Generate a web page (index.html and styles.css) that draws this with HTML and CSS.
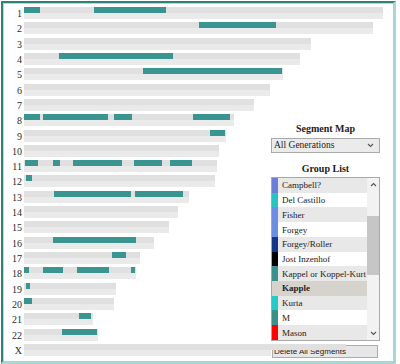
FILE: index.html
```html
<!DOCTYPE html>
<html>
<head>
<meta charset="utf-8">
<title>Segment Map</title>
<link rel="stylesheet" href="styles.css">
</head>
<body>
<div class="frame">
  <div class="chart">
    <div class="row"><span class="lbl">1</span><div class="bar" style="width:359px"><div class="top"><i class="seg" style="left:0;width:16px"></i><i class="seg" style="left:70px;width:72px"></i></div><div class="bot"></div></div></div>
    <div class="row"><span class="lbl">2</span><div class="bar" style="width:349px"><div class="top"><i class="seg" style="left:175px;width:77px"></i></div><div class="bot"></div></div></div>
    <div class="row"><span class="lbl">3</span><div class="bar" style="width:287px"><div class="top"></div><div class="bot"></div></div></div>
    <div class="row"><span class="lbl">4</span><div class="bar" style="width:276px"><div class="top"><i class="seg" style="left:35px;width:114px"></i></div><div class="bot"></div></div></div>
    <div class="row"><span class="lbl">5</span><div class="bar" style="width:259px"><div class="top"><i class="seg" style="left:119px;width:139px"></i></div><div class="bot"></div></div></div>
    <div class="row"><span class="lbl">6</span><div class="bar" style="width:246px"><div class="top"></div><div class="bot"></div></div></div>
    <div class="row"><span class="lbl">7</span><div class="bar" style="width:230px"><div class="top"></div><div class="bot"></div></div></div>
    <div class="row"><span class="lbl">8</span><div class="bar" style="width:210px"><div class="top"><i class="seg" style="left:0;width:16px"></i><i class="seg" style="left:19px;width:65px"></i><i class="seg" style="left:90px;width:18px"></i><i class="seg" style="left:169px;width:37px"></i></div><div class="bot"></div></div></div>
    <div class="row"><span class="lbl">9</span><div class="bar" style="width:202px"><div class="top"><i class="seg" style="left:186px;width:15px"></i></div><div class="bot"></div></div></div>
    <div class="row"><span class="lbl">10</span><div class="bar" style="width:195px"><div class="top"></div><div class="bot"></div></div></div>
    <div class="row"><span class="lbl">11</span><div class="bar" style="width:193px"><div class="top"><i class="seg" style="left:1px;width:13px"></i><i class="seg" style="left:29px;width:7px"></i><i class="seg" style="left:49px;width:49px"></i><i class="seg" style="left:110px;width:28px"></i><i class="seg" style="left:146px;width:22px"></i></div><div class="bot"></div></div></div>
    <div class="row"><span class="lbl">12</span><div class="bar" style="width:191px"><div class="top"><i class="seg" style="left:2px;width:6px"></i></div><div class="bot"></div></div></div>
    <div class="row"><span class="lbl">13</span><div class="bar" style="width:165px"><div class="top"><i class="seg" style="left:30px;width:77px"></i><i class="seg" style="left:111px;width:48px"></i></div><div class="bot"></div></div></div>
    <div class="row"><span class="lbl">14</span><div class="bar" style="width:154px"><div class="top"></div><div class="bot"></div></div></div>
    <div class="row"><span class="lbl">15</span><div class="bar" style="width:145px"><div class="top"></div><div class="bot"></div></div></div>
    <div class="row"><span class="lbl">16</span><div class="bar" style="width:130px"><div class="top"><i class="seg" style="left:29px;width:83px"></i></div><div class="bot"></div></div></div>
    <div class="row"><span class="lbl">17</span><div class="bar" style="width:116px"><div class="top"><i class="seg" style="left:88px;width:14px"></i></div><div class="bot"></div></div></div>
    <div class="row"><span class="lbl">18</span><div class="bar" style="width:112px"><div class="top"><i class="seg" style="left:0;width:5px"></i><i class="seg" style="left:19px;width:20px"></i><i class="seg" style="left:53px;width:32px"></i><i class="seg" style="left:107px;width:4px"></i></div><div class="bot"></div></div></div>
    <div class="row"><span class="lbl">19</span><div class="bar" style="width:92px"><div class="top"><i class="seg" style="left:2px;width:4px"></i></div><div class="bot"></div></div></div>
    <div class="row"><span class="lbl">20</span><div class="bar" style="width:90px"><div class="top"><i class="seg" style="left:0;width:8px"></i></div><div class="bot"></div></div></div>
    <div class="row"><span class="lbl">21</span><div class="bar" style="width:69px"><div class="top"><i class="seg" style="left:55px;width:12px"></i></div><div class="bot"></div></div></div>
    <div class="row"><span class="lbl">22</span><div class="bar" style="width:74px"><div class="top"><i class="seg" style="left:38px;width:35px"></i></div><div class="bot"></div></div></div>
    <div class="row"><span class="lbl">X</span><div class="bar" style="width:322px"><div class="top"></div><div class="bot"></div></div></div>
  </div>

  <div class="panel">
    <div class="title">Segment Map</div>
    <div class="select">
      <span>All Generations</span>
      <svg class="chev" width="7" height="5" viewBox="0 0 7 5"><polyline points="1,1 3.5,3.5 6,1" fill="none" stroke="#555" stroke-width="1.1"/></svg>
    </div>
    <div class="title title-gap">Group List</div>
    <div class="listbox">
      <div class="items">
        <div class="item alt"><span class="sw" style="background:#6a7ed8"></span>Campbell?</div>
        <div class="item"><span class="sw" style="background:#27c5c2"></span>Del Castillo</div>
        <div class="item alt"><span class="sw" style="background:#6c8ee2"></span>Fisher</div>
        <div class="item"><span class="sw" style="background:#6c8ee2"></span>Forgey</div>
        <div class="item alt"><span class="sw" style="background:#15358b"></span>Forgey/Roller</div>
        <div class="item"><span class="sw" style="background:#000000"></span>Jost Inzenhof</div>
        <div class="item alt"><span class="sw" style="background:#3a918c"></span>Kappel or Koppel-Kurt</div>
        <div class="item sel"><span class="sw"></span>Kapple</div>
        <div class="item alt"><span class="sw" style="background:#25c9c8"></span>Kurta</div>
        <div class="item"><span class="sw" style="background:#3a918c"></span>M</div>
        <div class="item alt"><span class="sw" style="background:#ff0000"></span>Mason</div>
      </div>
      <div class="scroll">
        <svg class="arrow" width="7" height="5" viewBox="0 0 7 5"><polyline points="1,4 3.5,1.5 6,4" fill="none" stroke="#555" stroke-width="1.1"/></svg>
        <div class="thumb"></div>
        <svg class="arrow arrow-down" width="7" height="5" viewBox="0 0 7 5"><polyline points="1,1 3.5,3.5 6,1" fill="none" stroke="#555" stroke-width="1.1"/></svg>
      </div>
    </div>
    <div class="button">Delete All Segments</div>
  </div>
</div>
</body>
</html>
```

FILE: styles.css
```css
html, body {
  margin: 0;
  padding: 0;
  background: #ffffff;
}

.frame {
  margin: 1px 0 0 1px;
  width: 390px;
  height: 358px;
  border-style: solid;
  border-width: 2px 3px 3px 2px;
  border-color: #2f7f7b #a7d7d5 #a7d7d5 #2f7f7b;
  box-shadow: inset 1px 1px 0 #b9d8d6;
  display: grid;
  grid-template-columns: 100%;
  grid-template-rows: 100%;
}

/* ---------- chromosome chart ---------- */
.chart {
  grid-area: 1 / 1;
  padding-top: 4px;
  display: grid;
  grid-auto-rows: 12px;
  row-gap: 3.32px;
  align-content: start;
}

.row {
  display: flex;
}

.lbl {
  width: 19px;
  margin-right: 2px;
  padding-top: 2px;
  text-align: right;
  font: 10px/10px "Liberation Serif", "DejaVu Serif", serif;
  color: #2a2a2a;
}

.bar {
  display: flex;
  flex-direction: column;
}

.top {
  position: relative;
  height: 6px;
  background: #e0e0e0;
}

.bot {
  height: 6px;
  background: #eaeaea;
}

.seg {
  position: absolute;
  top: 0;
  height: 6px;
  background: #3a948f;
}

/* ---------- right panel ---------- */
.panel {
  grid-area: 1 / 1;
  justify-self: end;
  align-self: end;
  width: 109px;
  margin: 0 13px 3px 0;
  display: flex;
  flex-direction: column;
  background: #ffffff;
  font-family: "Liberation Serif", "DejaVu Serif", serif;
  color: #222222;
}

.title {
  font-weight: bold;
  font-size: 10px;
  line-height: 12px;
  height: 12px;
  text-align: center;
  margin-bottom: 3px;
}

.title-gap {
  margin-bottom: 2px;
}

.select {
  width: 100px;
  height: 13px;
  border: 1px solid #a9a9a9;
  background: #ebebeb;
  padding: 0 5px 0 2px;
  margin-bottom: 10px;
  display: flex;
  align-items: center;
  justify-content: space-between;
  font-size: 9.5px;
  line-height: 13px;
}

.chev {
  display: block;
}

.listbox {
  height: 162px;
  border: 1px solid #a9a9a9;
  display: flex;
  overflow: hidden;
}

.items {
  flex: 1;
  display: flex;
  flex-direction: column;
}

.item {
  height: 14.73px;
  flex: none;
  display: flex;
  align-items: center;
  font-size: 9px;
  background: #ffffff;
}

.item.alt {
  background: #e8e8e8;
}

.item.sel {
  background: #d6d3cc;
  font-weight: bold;
}

.sw {
  width: 6px;
  height: 100%;
  margin-right: 4px;
  flex: none;
}

.scroll {
  width: 12px;
  background: #f2f2f2;
  display: flex;
  flex-direction: column;
  align-items: center;
}

.arrow {
  display: block;
  margin-top: 4px;
}

.arrow-down {
  margin-top: auto;
  margin-bottom: 4px;
}

.thumb {
  width: 12px;
  height: 59px;
  margin-top: 29px;
  background: #c6c6c6;
}

.button {
  margin: 4px 0 0 1px;
  width: 103px;
  height: 11px;
  border: 1px solid #ababab;
  background: #e7e7e7;
  padding-left: 1px;
  font: 8px/11px "Liberation Sans", "DejaVu Sans", sans-serif;
  color: #222222;
}
```
